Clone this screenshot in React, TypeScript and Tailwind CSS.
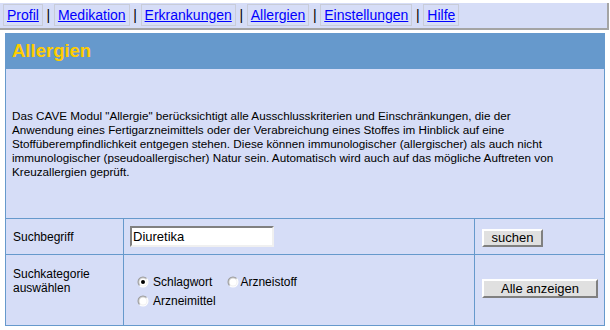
import type { ReactNode } from 'react';

const navItems: string[] = ['Profil', 'Medikation', 'Erkrankungen', 'Allergien', 'Einstellungen', 'Hilfe'];

const introLines: string[] = [
  'Das CAVE Modul "Allergie" berücksichtigt alle Ausschlusskriterien und Einschränkungen, die der',
  'Anwendung eines Fertigarzneimittels oder der Verabreichung eines Stoffes im Hinblick auf eine',
  'Stoffüberempfindlichkeit entgegen stehen. Diese können immunologischer (allergischer) als auch nicht',
  'immunologischer (pseudoallergischer) Natur sein. Automatisch wird auch auf das mögliche Auftreten von',
  'Kreuzallergien geprüft.',
];

function Radio({ checked }: { checked: boolean }): ReactNode {
  return (
    <svg width="12" height="12" viewBox="0 0 12 12" className="shrink-0">
      <defs>
        <linearGradient id="rimOuter" x1="0" y1="0" x2="1" y2="1">
          <stop offset="0.45" stopColor="#9a9a9a" />
          <stop offset="0.55" stopColor="#ffffff" />
        </linearGradient>
        <linearGradient id="rimInner" x1="0" y1="0" x2="1" y2="1">
          <stop offset="0.45" stopColor="#d0d0d0" />
          <stop offset="0.55" stopColor="#f0f0f0" />
        </linearGradient>
      </defs>
      <circle cx="6" cy="6" r="5.5" fill="url(#rimOuter)" />
      <circle cx="6" cy="6" r="4.5" fill="url(#rimInner)" />
      <circle cx="6" cy="6" r="3.5" fill="#ffffff" />
      {checked && <circle cx="6" cy="6" r="2" fill="#000000" />}
    </svg>
  );
}

function OldButton({ label, className }: { label: string; className: string }): ReactNode {
  return (
    <button
      type="button"
      className={`flex items-center justify-center border-2 border-t-white border-l-white border-r-[#808080] border-b-[#808080] bg-[#e0e0e0] text-[13px] leading-none text-black ${className}`}
    >
      {label}
    </button>
  );
}

export default function App(): ReactNode {
  return (
    <div className="h-[330px] w-[610px] overflow-hidden bg-white font-['Liberation_Sans',Arial,sans-serif] text-black">
      <nav className="mt-[3px] flex h-[27px] w-[609px] items-start border-r-2 border-b-2 border-[#a4a4a4] bg-[#d6ddf7] pl-[3px] pt-[1px]">
        {navItems.map((item, index) => (
          <div key={item} className="flex items-center">
            {index > 0 && (
              <span className="flex h-[22px] w-[11px] items-center justify-center text-[14px]">|</span>
            )}
            <a
              href="#"
              className="flex h-[22px] items-center border border-[#c8ccd8] px-[3px] text-[14px] text-[#0000ff] underline"
            >
              {item}
            </a>
          </div>
        ))}
      </nav>

      <section className="ml-[5px] mt-[3px] w-[600px]">
        <header className="flex h-[36px] items-center bg-[#6699cc] pl-[7px]">
          <h1 className="text-[18.5px] font-bold text-[#ffcc00]">Allergien</h1>
        </header>

        <div className="border-x border-b border-[#6699cc] bg-[#d6ddf7]">
          <div className="h-[150px] border-b border-[#6699cc] pl-[6px] pt-[40px] text-[11.7px] leading-[14px] whitespace-nowrap">
            {introLines.map((line) => (
              <p key={line}>{line}</p>
            ))}
          </div>

          <div className="flex h-[36px] border-b border-[#6699cc]">
            <div className="flex w-[117px] items-center pl-[7px] text-[12px]">Suchbegriff</div>
            <div className="flex w-[351px] items-center border-l border-[#6699cc] pl-[6px]">
              <input
                type="text"
                defaultValue="Diuretika"
                className="h-[21px] w-[144px] border-2 border-t-[#808080] border-l-[#808080] border-r-[#f0f0f0] border-b-[#f0f0f0] bg-white pl-[1px] text-[13px] text-black outline-none"
              />
            </div>
            <div className="flex flex-1 items-center border-l border-[#6699cc] pl-[7px] pt-[2px]">
              <OldButton label="suchen" className="h-[18px] w-[61px]" />
            </div>
          </div>

          <div className="flex h-[70px]">
            <div className="w-[117px] pl-[7px] pt-[12px] text-[12px] leading-[14px]">
              <p>Suchkategorie</p>
              <p>auswählen</p>
            </div>
            <div className="flex w-[351px] flex-col gap-[7px] border-l border-[#6699cc] pl-[13px] pt-[21px] text-[12px] leading-[12px]">
              <div className="flex items-center">
                <Radio checked />
                <span className="ml-[4px]">Schlagwort</span>
                <span className="ml-[15px]">
                  <Radio checked={false} />
                </span>
                <span className="ml-[1px]">Arzneistoff</span>
              </div>
              <div className="flex items-center">
                <Radio checked={false} />
                <span className="ml-[4px]">Arzneimittel</span>
              </div>
            </div>
            <div className="flex flex-1 items-center border-l border-[#6699cc] pl-[7px] pb-[3px]">
              <OldButton label="Alle anzeigen" className="h-[19px] w-[116px]" />
            </div>
          </div>
        </div>
      </section>
    </div>
  );
}
